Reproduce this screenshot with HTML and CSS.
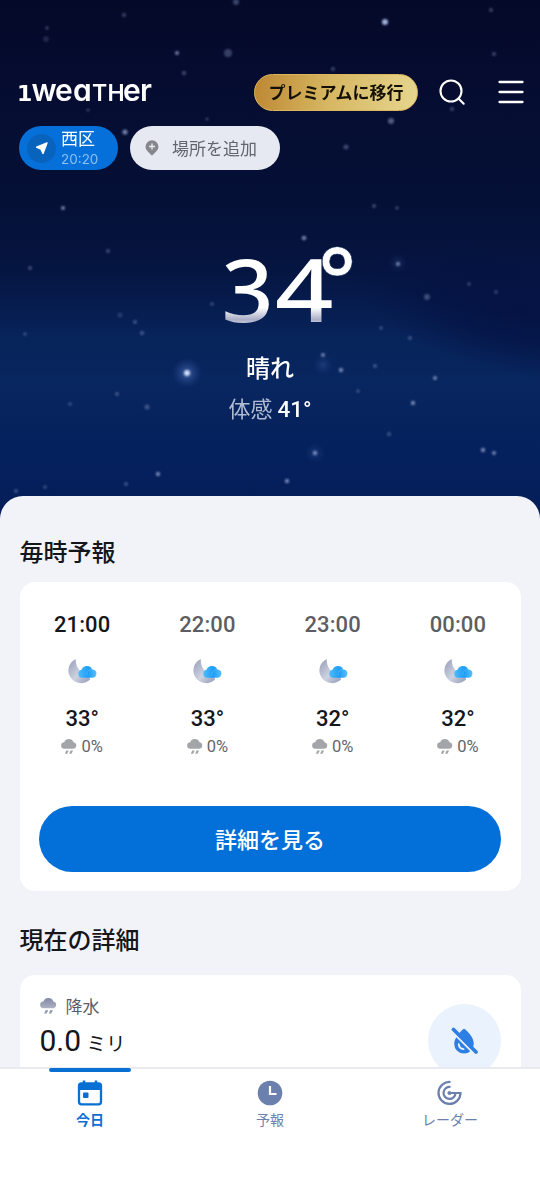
FILE: index.html
```html
<!DOCTYPE html>
<html lang="ja">
<head>
<meta charset="utf-8">
<title>1Weather</title>
<link rel="stylesheet" href="styles.css">
</head>
<body>
<svg class="defs" width="0" height="0" aria-hidden="true">
  <defs>
    <linearGradient id="moon" x1="0" y1="0" x2="1" y2="1"><stop offset="0" stop-color="#969eb8"/><stop offset=".55" stop-color="#cdd2e1"/><stop offset="1" stop-color="#9198b3"/></linearGradient>
    <linearGradient id="cloud" x1="0" y1="0" x2="1" y2="0"><stop offset="0" stop-color="#4cbcfc"/><stop offset=".55" stop-color="#209df8"/><stop offset="1" stop-color="#58c1fc"/></linearGradient>
    <linearGradient id="rainTone" x1="0" y1="0" x2="0" y2="1"><stop offset="0" stop-color="#8289a5"/><stop offset="1" stop-color="#adb2c3"/></linearGradient>
    <symbol id="night" viewBox="0 0 30 26">
      <path d="M9.500 .8A12.300 12.300 0 1 0 23.500 20.500L20 15C14 15 9 9 9.500 .8Z" fill="url(#moon)"/>
      <path d="M15.500 19a3.900 3.900 0 0 1-.5-7.700A5.700 5.700 0 0 1 25.400 11a4 4 0 0 1 .2 8Z" fill="url(#cloud)"/>
      <path d="M20.300 16.500a4 4 0 0 1 5.100-4.800" fill="none" stroke="#4db9fd" stroke-width=".7"/>
    </symbol>
    <symbol id="rain" viewBox="0 0 16 16">
      <path d="M3.500 9.700A3.200 3.200 0 0 1 3.200 3.300 5 5 0 0 1 12.500 3.200 3.300 3.300 0 0 1 12.500 9.700Z"/>
      <path d="M5.200 11.600h2.600L6.200 14.800H3.900ZM9.500 11.600h2.600L10.500 14.800H8.200Z"/>
    </symbol>
  </defs>
</svg>
<div class="app">
  <section class="hero">
    <svg class="sky" viewBox="0 0 540 520" aria-hidden="true">
      <defs>
        <filter id="soft" x="-5%" y="-5%" width="110%" height="110%"><feGaussianBlur stdDeviation=".8"/></filter>
        <radialGradient id="dusk"><stop offset="0" stop-color="#041141" stop-opacity=".85"/><stop offset=".5" stop-color="#041141" stop-opacity=".6"/><stop offset="1" stop-color="#041141" stop-opacity="0"/></radialGradient>
        <radialGradient id="glow"><stop offset="0" stop-color="#7ba0ee" stop-opacity=".45"/><stop offset="1" stop-color="#3c62ba" stop-opacity="0"/></radialGradient>
      </defs>
      <ellipse cx="520" cy="310" rx="170" ry="65" fill="url(#dusk)" transform="rotate(12 520 310)"/>
      <circle cx="187" cy="373" r="15" fill="url(#glow)"/>
      <circle cx="323" cy="365" r="10" fill="url(#glow)" opacity=".4"/>
      <circle cx="315" cy="453" r="10" fill="url(#glow)" opacity=".4"/>
      <circle cx="398" cy="263" r="10" fill="url(#glow)" opacity=".3"/>
      <g filter="url(#soft)" fill="#a3b0da">
        <circle cx="385" cy="22" r="3"/><circle cx="187" cy="373" r="3" fill="#cfdcfa"/>
        <g opacity=".7"><circle cx="177" cy="53" r="2"/><circle cx="125" cy="132" r="2.600"/><circle cx="63" cy="208" r="2"/><circle cx="304" cy="238" r="2.300"/><circle cx="391" cy="121" r="3" opacity=".7"/><circle cx="323" cy="355" r="2"/><circle cx="341" cy="370" r="2.200"/><circle cx="315" cy="453" r="2.200"/><circle cx="413" cy="403" r="2.200"/><circle cx="435" cy="378" r="2"/><circle cx="483" cy="450" r="2.200"/><circle cx="494" cy="453" r="2"/><circle cx="287" cy="481" r="2.200"/><circle cx="158" cy="474" r="2.200"/><circle cx="398" cy="264" r="2"/><circle cx="208" cy="130" r="1.700"/></g>
        <g opacity=".36"><circle cx="236" cy="2" r="3"/><circle cx="124" cy="15" r="2"/><circle cx="47" cy="28" r="1.700"/><circle cx="46" cy="39" r="3" opacity=".5"/><circle cx="228" cy="53" r="4" opacity=".9"/><circle cx="184" cy="73" r="2.200"/><circle cx="491" cy="10" r="2"/><circle cx="494" cy="54" r="2"/><circle cx="333" cy="69" r="2"/><circle cx="88" cy="110" r="1.600"/><circle cx="207" cy="119" r="1.600"/><circle cx="346" cy="147" r="2.500"/><circle cx="452" cy="109" r="2"/><circle cx="374" cy="206" r="2"/><circle cx="397" cy="208" r="1.700"/><circle cx="108" cy="251" r="2"/><circle cx="30" cy="268" r="2"/><circle cx="427" cy="297" r="3"/><circle cx="469" cy="284" r="1.800"/><circle cx="496" cy="292" r="1.700"/><circle cx="212" cy="304" r="1.800"/><circle cx="120" cy="315" r="2.500" opacity=".6"/><circle cx="135" cy="322" r="2"/><circle cx="142" cy="333" r="2.200"/><circle cx="25" cy="334" r="1.700"/><circle cx="381" cy="328" r="1.800"/><circle cx="410" cy="338" r="2"/><circle cx="375" cy="366" r="2"/><circle cx="358" cy="391" r="1.800"/><circle cx="117" cy="394" r="2"/><circle cx="70" cy="404" r="1.800"/><circle cx="147" cy="407" r="2.500"/><circle cx="389" cy="434" r="2"/><circle cx="126" cy="484" r="2"/><circle cx="45" cy="487" r="1.800"/><circle cx="16" cy="491" r="2"/></g>
      </g>
    </svg>

    <header class="topbar">
      <svg class="logo" width="134" height="24" viewBox="0 0 134 24" role="img" aria-label="1weather">
        <text class="logo-text" y="20"><tspan class="one" x="-2">1</tspan><tspan x="12.500">w</tspan><tspan x="36 54">ea</tspan><tspan class="cap" x="73 88.500">TH</tspan><tspan x="104 121">er</tspan></text>
      </svg>
      <button class="premium">プレミアムに移行</button>
      <svg class="search" width="28" height="28" viewBox="0 0 28 28" fill="none" stroke="#fff" stroke-width="2.100" stroke-linecap="round"><circle cx="13" cy="13" r="10.500"/><path d="m20.500 20.500 5.200 5.200"/></svg>
      <svg class="menu" width="26" height="26" viewBox="0 0 26 26" stroke="#fff" stroke-width="2.300" stroke-linecap="round"><path d="M1.500 3h23M1.500 13h23M1.500 23h23"/></svg>
    </header>

    <div class="places">
      <div class="place">
        <span class="locator"><svg width="14" height="14" viewBox="0 0 14 14" fill="#fff" stroke="#fff" stroke-width="1.400" stroke-linejoin="round"><path d="M12 2 1.600 6.200l4.400 2L8 12.400Z"/></svg></span>
        <div class="place-copy"><span class="place-name">西区</span><span class="place-time">20:20</span></div>
      </div>
      <div class="add-place">
        <svg width="14" height="16" viewBox="0 0 14 16"><path d="M7 .3A6.500 6.500 0 0 0 .5 6.800C.5 10.500 5 13.500 7 15.800 9 13.500 13.500 10.500 13.500 6.800A6.500 6.500 0 0 0 7 .3Z" fill="#85878d"/><path d="M7 3.500v6M4 6.500h6" stroke="#e6e9f1" stroke-width="1.400"/></svg>
        <span>場所を追加</span>
      </div>
    </div>

    <div class="current">
      <svg class="temperature" width="140" height="90" viewBox="0 0 140 90" role="img" aria-label="34°">
        <defs><linearGradient id="silver" gradientUnits="userSpaceOnUse" x1="0" y1="18" x2="0" y2="82"><stop offset="0" stop-color="#fff"/><stop offset=".76" stop-color="#fff"/><stop offset=".95" stop-color="#a9adc5"/><stop offset="1" stop-color="#c9cde0"/></linearGradient></defs>
        <text class="digits" fill="url(#silver)" x="4.500" y="81" textLength="52" lengthAdjust="spacingAndGlyphs">3</text>
        <text class="digits" fill="url(#silver)" x="58" y="81" textLength="58.500" lengthAdjust="spacingAndGlyphs">4</text>
        <text class="degree" x="101" y="71">°</text>
      </svg>
      <div class="condition">晴れ</div>
      <div class="feels"><span class="feels-label">体感</span><span>41°</span></div>
    </div>
  </section>

  <main class="sheet">
    <h2>毎時予報</h2>
    <section class="card hourly">
      <div class="hours">
        <div class="hour now"><span class="time">21:00</span><svg class="weather"><use href="#night"/></svg><span class="degrees">33°</span><span class="chance"><svg><use href="#rain"/></svg>0%</span></div>
        <div class="hour"><span class="time">22:00</span><svg class="weather"><use href="#night"/></svg><span class="degrees">33°</span><span class="chance"><svg><use href="#rain"/></svg>0%</span></div>
        <div class="hour"><span class="time">23:00</span><svg class="weather"><use href="#night"/></svg><span class="degrees">32°</span><span class="chance"><svg><use href="#rain"/></svg>0%</span></div>
        <div class="hour"><span class="time">00:00</span><svg class="weather"><use href="#night"/></svg><span class="degrees">32°</span><span class="chance"><svg><use href="#rain"/></svg>0%</span></div>
      </div>
      <button class="more">詳細を見る</button>
    </section>
    <h2 class="details-title">現在の詳細</h2>
    <section class="card details">
      <div>
        <div class="detail-label"><svg><use href="#rain"/></svg><span>降水</span></div>
        <div class="detail-value">0.0 <span>ミリ</span></div>
      </div>
      <div class="dry"><svg width="28" height="30" viewBox="0 0 28 30"><path d="M12.800 3.400Q14 2 15.300 3.400C20 7.500 23.800 12.500 23.800 17.800a9.800 9.800 0 0 1-19.600 0C4.200 13 8.500 7.500 12.800 3.400Z" fill="#2e7fe3"/><path d="M8.800 18.200c.2 3 2 4.600 4.700 4.900" fill="none" stroke="#eaf2fe" stroke-width="1.900" stroke-linecap="round"/><path d="m2 5.500 23 23" stroke="#eaf2fe" stroke-width="2.200"/><path d="m3.500 3.500 22.500 22.500" stroke="#2e7fe3" stroke-width="3.700" stroke-linecap="round"/></svg></div>
    </section>
  </main>

  <nav class="tabs">
    <a class="tab active"><svg width="26" height="28" viewBox="0 0 26 28"><path d="M7 1.500v4M19 1.500v4" stroke="#0870d3" stroke-width="2.500"/><rect x="2" y="4.500" width="22" height="20.800" rx="2.500" fill="none" stroke="#0870d3" stroke-width="2.300"/><path d="M2 5h22v6H2z" fill="#0870d3"/><rect x="6" y="13.500" width="5.500" height="5.500" rx="1" fill="#0870d3"/></svg><span>今日</span></a>
    <a class="tab"><svg width="26" height="28" viewBox="0 0 26 28"><circle cx="13" cy="14" r="12.300" fill="#6b80ac"/><path d="M13 7v8h6.500" fill="none" stroke="#fff" stroke-width="2.200"/></svg><span>予報</span></a>
    <a class="tab"><svg width="26" height="28" viewBox="0 0 26 28" fill="none" stroke="#6b80ac" stroke-width="2.200"><path d="M13.500 3A11 11 0 1 0 23.500 14H12"/><path d="M13.500 8A6 6 0 1 0 18.500 14"/><circle cx="12.500" cy="14" r="1.600" fill="#6b80ac" stroke-width="1"/></svg><span>レーダー</span></a>
  </nav>
</div>
</body>
</html>
```

FILE: styles.css
```css
* { box-sizing: border-box; }
body { margin: 0; font-family: Roboto, "Noto Sans CJK JP", sans-serif; color: #14161c; }
button { border: 0; font: inherit; padding: 0; }
svg { display: block; flex: none; }
.defs { position: absolute; }
.app { width: 540px; height: 1200px; overflow: hidden; display: flex; flex-direction: column; background: #fff; }

.hero { position: relative; height: 520px; flex: none; padding-top: 73px; color: #fff; background: linear-gradient(#050929 0, #050d32 110px, #051036 200px, #051541 270px, #07235a 335px, #08265f 380px, #05215d 450px, #041d58 520px); }
.sky { position: absolute; inset: 0; width: 540px; height: 520px; }
.topbar, .places, .current { position: relative; }
.topbar { height: 38px; padding: 0 16px 0 19px; display: flex; align-items: center; }
.logo { overflow: visible; margin-top: 1px; }
.logo-text { font: 600 30px Inter, sans-serif; font-feature-settings: "cv11"; fill: #fff; }
.logo-text .cap { font-size: 23px; }
.logo-text .one { font: 700 22px "DejaVu Sans", sans-serif; }
.premium { width: 164px; height: 37px; margin-left: 101px; border: 1.500px solid #dcb65f; border-radius: 19px; background: linear-gradient(100deg, #bd8733, #d6b661 45%, #e6d68f); color: #141005; font: 700 17px/34px "Noto Sans CJK JP", sans-serif; white-space: nowrap; }
.search { margin-left: 20px; }
.menu { margin-left: 32px; }
.places { display: flex; gap: 12px; margin: 15px 0 0 19px; }
.place { width: 99px; height: 44px; border-radius: 22px; background: #0670da; display: flex; align-items: center; padding-left: 8px; }
.locator { width: 29px; height: 29px; border-radius: 50%; background: #0863bd; display: grid; place-items: center; }
.place-copy { display: flex; flex-direction: column; margin-left: 5px; }
.place-name { font: 400 17px/22px "Noto Sans CJK JP", sans-serif; }
.place-time { font: 400 13.500px/20px Inter, sans-serif; color: #8dc0f3; }
.add-place { width: 150px; height: 44px; border-radius: 22px; background: #e6e9f1; color: #62656e; display: flex; align-items: center; gap: 13px; padding-left: 15px; font: 400 17px/42px "Noto Sans CJK JP", sans-serif; }
.current { display: flex; flex-direction: column; align-items: center; margin-top: 71px; }
.temperature { margin-left: 34px; overflow: visible; }
.digits { font: 500 88px "Noto Sans", sans-serif; }
.degree { font: 600 90px "Noto Sans", sans-serif; fill: #fff; stroke: #07205a; stroke-width: .6px; }
.condition { font: 500 24px/36px "Noto Sans CJK JP", sans-serif; margin-top: 18px; }
.feels { display: flex; gap: 5px; font-size: 22.500px; font-weight: 500; line-height: 36px; margin-top: 6px; }
.feels-label { font: 400 22px/32px "Noto Sans CJK JP", sans-serif; color: #b1bbd3; }

.sheet { position: relative; height: 571px; margin-top: -24px; flex: none; overflow: hidden; border-radius: 23px 23px 0 0; background: #f2f3f8; padding: 37px 19.500px 0; }
h2 { margin: 0 0 13px; font: 500 24px/36px "Noto Sans CJK JP", sans-serif; }
.card { background: #fff; border-radius: 15px; }
.hourly { height: 309px; padding-top: 28px; }
.hours { display: grid; grid-template-columns: repeat(4, 1fr); height: 196px; }
.hour { display: flex; flex-direction: column; align-items: center; }
.time { font-size: 22px; line-height: 30px; font-weight: 500; letter-spacing: .1px; color: #5d5e63; }
.now .time { color: #14161c; }
.weather { width: 31px; height: 27px; margin-top: 18px; margin-right: 1px; }
.degrees { font-size: 22px; line-height: 30px; font-weight: 500; margin-top: 19px; }
.chance { display: flex; align-items: center; gap: 4px; font-size: 16.500px; line-height: 24px; margin-top: 1px; color: #64666a; }
.chance svg { width: 16px; height: 16px; fill: #a4a5a8; }
.more { display: block; width: 462px; height: 66px; margin: 0 auto; border-radius: 33px; background: #0270d8; color: #fff; font: 500 22px/64px "Noto Sans CJK JP", sans-serif; padding-bottom: 2px; }
.details-title { margin-top: 30px; margin-bottom: 18px; }
.details { height: 180px; display: flex; justify-content: space-between; padding: 19px 20px 0 20px; }
.detail-label { display: flex; align-items: center; gap: 9px; font: 400 17px/24px "Noto Sans CJK JP", sans-serif; color: #5b5e66; }
.detail-label svg { width: 17px; height: 17px; fill: url(#rainTone); }
.detail-value { font-size: 30px; line-height: 46px; }
.detail-value span { font: 400 19.500px "Noto Sans CJK JP", sans-serif; margin-left: -2px; }
.dry { width: 73px; height: 73px; margin-top: 10px; border-radius: 50%; background: #eaf2fe; display: grid; place-items: center; }

.tabs { flex: 1; border-top: 2px solid #e9eaf0; display: grid; grid-template-columns: repeat(3, 1fr); background: #fff; }
.tab { position: relative; display: flex; flex-direction: column; align-items: center; padding-top: 10px; color: #6b80ac; font: 400 14px/22px "Noto Sans CJK JP", sans-serif; }
.tab span { margin-top: 1px; }
.active { color: #0870d3; font-weight: 700; }
.active::before { content: ""; position: absolute; top: -1px; left: 49px; width: 82px; height: 4px; border-radius: 2px; background: #0870d3; }
```
